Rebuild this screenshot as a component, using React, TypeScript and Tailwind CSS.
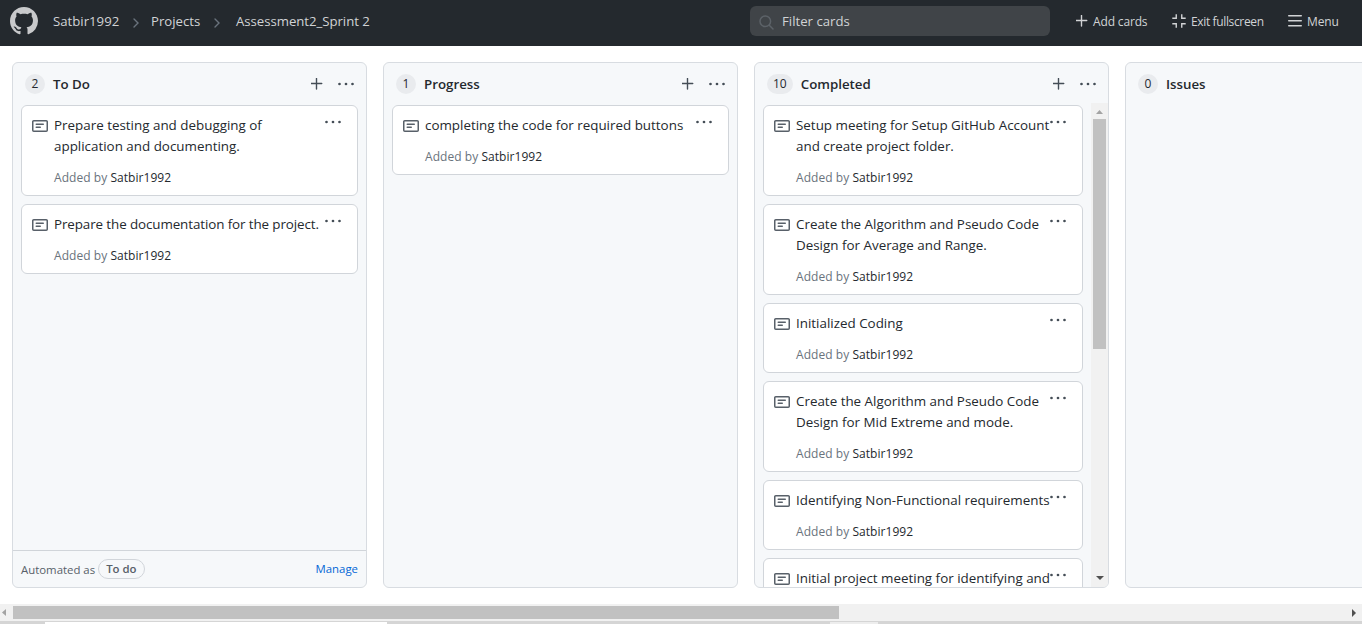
import React from "react";

type IconProps = { className?: string };

const NoteIcon = () => (
  <svg viewBox="0 0 16 16" width="16" height="16" fill="#586069">
    <path
      fillRule="evenodd"
      d="M0 3.75C0 2.784.784 2 1.75 2h12.5c.966 0 1.75.784 1.75 1.75v8.5A1.75 1.75 0 0114.25 14H1.75A1.75 1.75 0 010 12.25v-8.5zm1.75-.25a.25.25 0 00-.25.25v8.5c0 .138.112.25.25.25h12.5a.25.25 0 00.25-.25v-8.5a.25.25 0 00-.25-.25H1.75zM3.5 6.25a.75.75 0 01.75-.75h7a.75.75 0 010 1.5h-7a.75.75 0 01-.75-.75zm.75 2.25a.75.75 0 000 1.5h4a.75.75 0 000-1.5h-4z"
    />
  </svg>
);

const Dots = ({ className = "" }: IconProps) => (
  <svg viewBox="0 0 18 4" width="18" height="4" fill="#444d56" className={className}>
    <circle cx="1.5" cy="2" r="1.35" />
    <circle cx="8" cy="2" r="1.35" />
    <circle cx="14.5" cy="2" r="1.35" />
  </svg>
);

const Plus = ({ className = "" }: IconProps) => (
  <svg viewBox="0 0 12 12" width="12" height="12" fill="none" stroke="currentColor" strokeWidth="1.4" strokeLinecap="round" className={className}>
    <path d="M5.500 .5v10.500M.25 5.500h10.500" />
  </svg>
);

const Chevron = ({ className = "" }: IconProps) => (
  <svg viewBox="0 0 6 10" width="6" height="10" fill="none" stroke="#6a737d" strokeWidth="1.4" strokeLinecap="round" className={className}>
    <path d="M1 1l4 4-4 4" />
  </svg>
);

const SearchIcon = () => (
  <svg viewBox="0 0 15 15" width="15" height="15" fill="none" stroke="#5c6268" strokeWidth="1.5" strokeLinecap="round">
    <circle cx="6.3" cy="6.3" r="5.3" />
    <path d="M10.3 10.3l3.7 3.7" />
  </svg>
);

const ExitIcon = () => (
  <svg viewBox="0 0 14 14" width="14" height="14" fill="none" stroke="currentColor" strokeWidth="1.4">
    <path d="M4.250 .3v3.950H.3M9.750 .3v3.950h3.950M4.250 13.700V9.750H.3M9.750 13.700V9.750h3.950" />
  </svg>
);

const MenuIcon = () => (
  <svg viewBox="0 0 14 12" width="14" height="12" fill="none" stroke="currentColor" strokeWidth="1.4" strokeLinecap="round">
    <path d="M.7 .8h12.600M.7 5.800h12.600M.7 10.800h12.600" />
  </svg>
);

const Mark = () => (
  <svg viewBox="0 0 16 16" width="28" height="28" fill="#c8c9cb">
    <path
      fillRule="evenodd"
      d="M8 0C3.58 0 0 3.58 0 8c0 3.54 2.29 6.53 5.47 7.59.4.07.55-.17.55-.38 0-.19-.01-.82-.01-1.49-2.01.37-2.53-.49-2.69-.94-.09-.23-.48-.94-.82-1.13-.28-.15-.68-.52-.01-.53.63-.01 1.08.58 1.23.82.72 1.21 1.87.87 2.33.66.07-.52.28-.87.51-1.07-1.78-.2-3.64-.89-3.64-3.95 0-.87.31-1.59.82-2.15-.08-.2-.36-1.02.08-2.12 0 0 .67-.21 2.2.82.64-.18 1.32-.27 2-.27.68 0 1.36.09 2 .27 1.53-1.04 2.2-.82 2.2-.82.44 1.1.16 1.92.08 2.12.51.56.82 1.27.82 2.15 0 3.07-1.87 3.75-3.65 3.95.29.25.54.73.54 1.48 0 1.07-.01 1.93-.01 2.2 0 .21.15.46.55.38A8.013 8.013 0 0016 8c0-4.42-3.58-8-8-8z"
    />
  </svg>
);

type CardData = { lines: string[]; author?: string; tight?: boolean };

const Card = ({ lines, author, tight }: CardData) => (
  <article className="relative min-h-[70px] shrink-0 rounded-[6px] border border-[#d1d5da] bg-white pt-[9px] pb-[7px] pl-[10px]">
    <div className="flex">
      <div className="mt-[3px] w-[22px] shrink-0">
        <NoteIcon />
      </div>
      <div className={tight ? "tracking-[-0.1px]" : "tracking-normal"}>
        {lines.map((line) => (
          <p key={line} className="text-[13.4px] leading-[21px] whitespace-nowrap text-[#24292e]">
            {line}
          </p>
        ))}
        {author && (
          <p className="mt-[10px] text-[12px] leading-[21px] tracking-[0.05px] whitespace-nowrap text-[#6a737d]">
            Added by <span className="text-[#24292e]">{author}</span>
          </p>
        )}
      </div>
    </div>
    <Dots className="absolute top-[14px] right-[14px]" />
  </article>
);

type ColumnProps = {
  count: number;
  title: string;
  cards: CardData[];
  scroll?: boolean;
  footer?: boolean;
};

const Column = ({ count, title, cards, scroll, footer }: ColumnProps) => (
  <section className="flex h-[526px] w-[355px] shrink-0 flex-col overflow-hidden rounded-[6px] border border-[#d8dce1] bg-[#f6f8fa]">
    <header className="flex h-[42px] shrink-0 items-center pr-[10px] pl-3">
      <span className="flex h-5 min-w-5 items-center justify-center rounded-full bg-[#e9ebee] px-[6px] text-[12px] text-[#24292e]">
        {count}
      </span>
      <h3 className="mt-px ml-[8px] text-[13.3px] font-semibold text-[#24292e]">{title}</h3>
      <Plus className="mb-px ml-auto text-[#444d56]" />
      <Dots className="ml-[15px]" />
    </header>
    <div className="flex min-h-0 flex-1">
      <div className={scroll ? "flex w-[336px] flex-col gap-2 overflow-hidden px-2" : "flex flex-1 flex-col gap-2 px-2"}>
        {cards.map((card) => (
          <Card key={card.lines.join()} {...card} />
        ))}
      </div>
      {scroll && (
        <div className="-mt-[2px] flex w-[17px] flex-col items-center bg-[#f1f1f1]">
          <svg width="7" height="4" className="mt-[7px] mb-[5px] shrink-0" fill="#a3a3a3">
            <path d="M3.5 0L7 4H0z" />
          </svg>
          <div className="h-[230px] w-[13px] bg-[#c1c1c1]" />
          <svg width="8" height="4" className="mt-auto mb-[7px]" fill="#505050">
            <path d="M0 0h8L4 4z" />
          </svg>
        </div>
      )}
    </div>
    {footer && (
      <footer className="flex h-[37px] shrink-0 items-center border-t border-[#d1d5da] px-2 text-[11.4px] text-[#586069]">
        <span className="pt-px">Automated as</span>
        <span className="ml-[3px] flex h-5 items-center rounded-full border border-[#d1d5da] px-[7px] font-semibold">To do</span>
        <span className="ml-auto text-[#0366d6]">Manage</span>
      </footer>
    )}
  </section>
);

const ME = "Satbir1992";

export default function App() {
  return (
    <div className="flex h-[624px] w-[1362px] flex-col overflow-hidden bg-white font-['Open_Sans',sans-serif]">
      <nav className="flex h-[46px] shrink-0 items-center bg-[#24292e] pb-[4px] pl-[10px] text-[13.2px] whitespace-nowrap text-[#d1d3d5]">
        <Mark />
        <div className="flex w-[712px] items-center pt-[2px] pl-[15px]">
          <span className="w-[80px]">Satbir1992</span>
          <Chevron className="mt-[2px] mr-[12px]" />
          <span className="w-[63px]">Projects</span>
          <Chevron className="mt-[2px] mr-[16px]" />
          <span className="tracking-[-0.03px]">Assessment2_Sprint 2</span>
        </div>
        <div className="flex h-[30px] w-[300px] items-center gap-[8px] rounded-[6px] bg-[#404448] pl-[9px]">
          <div className="pt-[3px]">
            <SearchIcon />
          </div>
          <span className="pt-[2px]">Filter cards</span>
        </div>
        <div className="flex items-center pl-[26px] text-[12px]">
          <div className="flex w-[96px] items-center gap-[5px]">
            <Plus />
            <span className="pt-[2px] tracking-[-0.15px]">Add cards</span>
          </div>
          <div className="flex w-[116px] items-center gap-[5px]">
            <ExitIcon />
            <span className="pt-[2px] tracking-[-0.36px]">Exit fullscreen</span>
          </div>
          <div className="flex items-center gap-[5px]">
            <MenuIcon />
            <span className="pt-[2px] tracking-[-0.15px]">Menu</span>
          </div>
        </div>
      </nav>
      <main className="flex h-[558px] shrink-0 gap-4 pt-4 pl-3">
        <Column
          count={2}
          title="To Do"
          footer
          cards={[
            { lines: ["Prepare testing and debugging of", "application and documenting."], author: ME },
            { lines: ["Prepare the documentation for the project."], author: ME, tight: true },
          ]}
        />
        <Column count={1} title="Progress" cards={[{ lines: ["completing the code for required buttons"], author: ME }]} />
        <Column
          count={10}
          title="Completed"
          scroll
          cards={[
            { lines: ["Setup meeting for Setup GitHub Account", "and create project folder."], author: ME },
            { lines: ["Create the Algorithm and Pseudo Code", "Design for Average and Range."], author: ME },
            { lines: ["Initialized Coding"], author: ME },
            { lines: ["Create the Algorithm and Pseudo Code", "Design for Mid Extreme and mode."], author: ME },
            { lines: ["Identifying Non-Functional requirements"], author: ME },
            { lines: ["Initial project meeting for identifying and"] },
          ]}
        />
        <Column count={0} title="Issues" cards={[]} />
      </main>
      <div className="flex h-[17px] shrink-0 items-center bg-[#f1f1f1] pr-[6px] pl-[2px]">
        <svg width="4" height="7" fill="#a3a3a3">
          <path d="M4 0v7L0 3.500z" />
        </svg>
        <div className="ml-[7px] h-[13px] w-[826px] bg-[#c1c1c1]" />
        <svg width="4" height="8" className="ml-auto" fill="#505050">
          <path d="M0 0v8l4-4z" />
        </svg>
      </div>
      <div className="flex h-[3px] shrink-0 border-t border-[#d5d5d5] bg-[#d5d5d5]">
        <div className="ml-[45px] w-[342px] bg-white" />
        <div className="ml-[443px] w-[48px] bg-[#ededed]" />
      </div>
    </div>
  );
}
